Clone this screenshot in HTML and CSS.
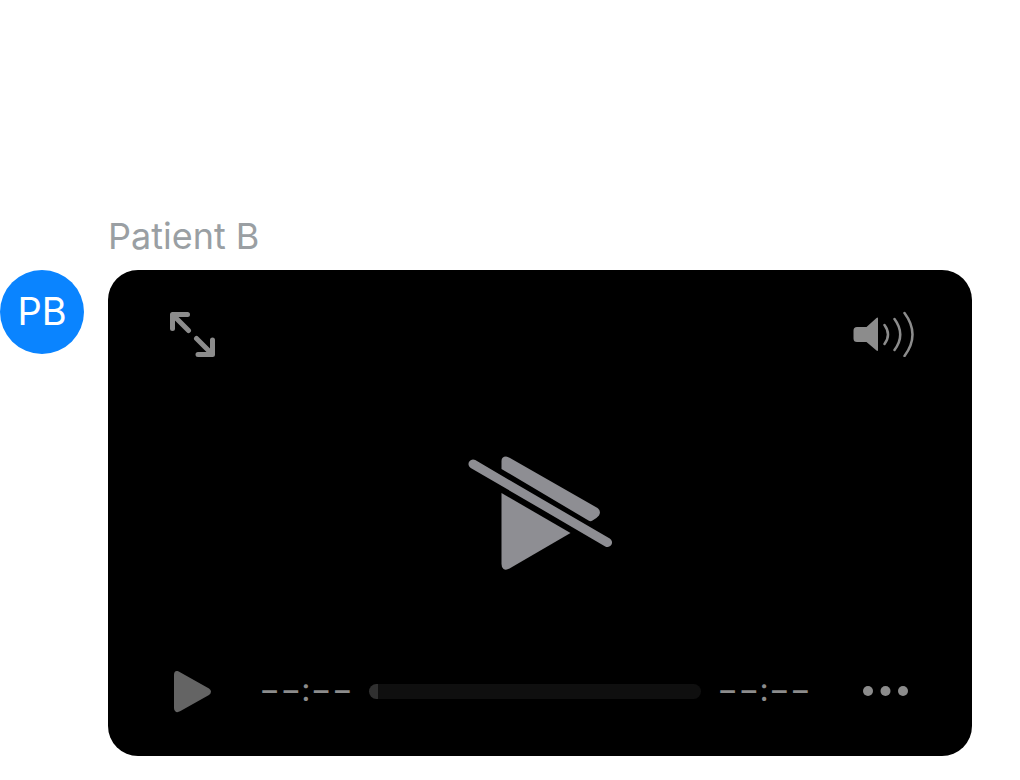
FILE: index.html
```html
<!DOCTYPE html>
<html lang="en">
<head>
<meta charset="utf-8">
<meta name="viewport" content="width=device-width, initial-scale=1">
<title>Patient B</title>
<link rel="stylesheet" href="styles.css">
</head>
<body>
<main class="chat">
  <article class="message">
    <h2 class="sender">Patient B</h2>
    <div class="avatar">PB</div>
    <section class="player" aria-label="Video player">
      <div class="row">
        <button class="control" type="button" aria-label="Full screen">
          <svg width="46" height="46" viewBox="0 0 46 46" fill="none" stroke="#8c8c8c" stroke-width="5" stroke-linecap="round" stroke-linejoin="round">
            <path d="M2.500 17.500V3.500H17.500M3.500 4.500L18.500 19.500M42.500 29V43.500H28M42 43L26.500 27.500"/>
          </svg>
        </button>
        <button class="control" type="button" aria-label="Mute">
          <svg width="62" height="46" viewBox="0 0 62 46">
            <path fill="#8c8c8c" d="M4 16H13.500L23.500 7Q25 6 25 7.500V39Q25 40.500 23.500 39.500L13.500 31H4Q0.500 31 0.500 27.500V19.500Q0.500 16 4 16Z"/>
            <path fill="none" stroke="#8c8c8c" stroke-width="2.500" stroke-linecap="round" d="M31.500 14Q38.500 23.500 31.500 33M41.500 8Q53 23.500 41.500 39M51.500 2Q67.500 23.500 51.500 45"/>
          </svg>
        </button>
      </div>
      <div class="unavailable">
        <svg width="146" height="116" viewBox="0 0 146 116" role="img" aria-label="Video unavailable">
          <g fill="#8e8e93">
            <path d="M34.500 5Q34.500 .5 39 .5Q40.500 .5 43 2L130.500 52Q134.500 55 132 59.500Q129.500 62.500 125.500 64.500Q123.500 66 121.500 64.500L34.500 13Z"/>
            <path d="M34.500 37L103.500 77L42.500 112.500Q39 114.500 36.500 113Q34.500 111.500 34.500 108Z"/>
          </g>
          <path stroke="#8e8e93" stroke-width="9" stroke-linecap="round" d="M6 8L140.500 86.500"/>
        </svg>
      </div>
      <div class="row">
        <button class="control play" type="button" aria-label="Play">
          <svg width="38" height="44" viewBox="0 0 38 44">
            <path fill="#646464" d="M1 5Q1 .5 4.500 1Q5.500 1 7.500 2.500L36 18.500Q38 20 38 21.500Q38 23.500 36 25L7.500 41Q4 43 2.500 41.500Q1 41 1 38Z"/>
          </svg>
        </button>
        <div class="timeline">
          <span class="time">−−:−−</span>
          <input class="scrubber" type="range" min="0" max="100" value="0" aria-label="Playback position">
          <span class="time">−−:−−</span>
        </div>
        <button class="control more" type="button" aria-label="More options">
          <svg width="46" height="12" viewBox="0 0 46 12" fill="#8c8c8c">
            <circle cx="5" cy="5" r="5"/><circle cx="22.500" cy="5" r="5"/><circle cx="40" cy="5" r="5"/>
          </svg>
        </button>
      </div>
    </section>
  </article>
</main>
</body>
</html>
```
FILE: styles.css
```css
* {
  box-sizing: border-box;
}

body {
  margin: 0;
  background: #fff;
  font-family: Inter, "Liberation Sans", sans-serif;
}

.chat {
  padding: 215px 48px 24px 0;
}

.message {
  display: grid;
  grid-template-columns: 84px 1fr;
  column-gap: 24px;
  row-gap: 13px;
}

.sender {
  grid-column: 2;
  margin: 0;
  color: #9a9fa3;
  font-size: 36px;
  font-weight: 400;
  line-height: 42px;
}

.avatar {
  display: flex;
  align-items: center;
  justify-content: center;
  width: 84px;
  height: 84px;
  padding-bottom: 2px;
  border-radius: 50%;
  background: #0a84ff;
  color: #fff;
  font-size: 38px;
}

.player {
  display: flex;
  flex-direction: column;
  justify-content: space-between;
  aspect-ratio: 16 / 9;
  padding: 41px 57px 42px 62px;
  border-radius: 30px;
  background: #000;
}

.row {
  display: flex;
  align-items: center;
  justify-content: space-between;
}

.control {
  display: flex;
  padding: 0;
  border: 0;
  background: none;
}

.play {
  margin-left: 3px;
}

.more {
  margin-right: 6px;
}

.unavailable {
  display: flex;
  justify-content: center;
  padding-right: 5px;
}

.timeline {
  display: flex;
  flex: 1;
  align-items: center;
  gap: 16px;
  margin: 0 52px 0 48px;
  padding-bottom: 2px;
}

.time {
  padding-bottom: 3px;
  color: #8c8c8c;
  font-size: 32px;
  line-height: 36px;
}

.scrubber {
  flex: 1;
  min-width: 0;
  height: 15px;
  margin: 0;
  border-radius: 8px;
  background: linear-gradient(to right, #303030 9px, #0f0f0f 9px);
  appearance: none;
}

.scrubber::-webkit-slider-thumb {
  width: 1px;
  height: 15px;
  opacity: 0;
  appearance: none;
}
```
